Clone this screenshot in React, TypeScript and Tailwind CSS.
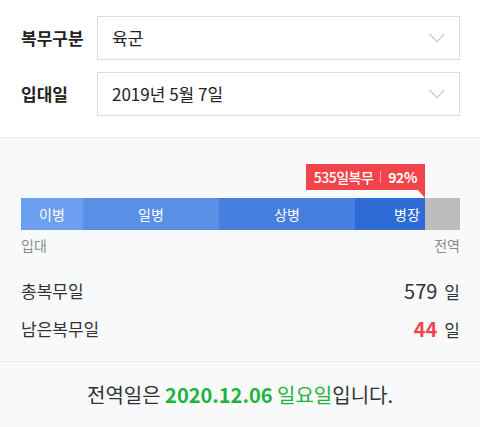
import { ChevronDown } from 'lucide-react'

const ranks = [
  { name: '이병', width: 14.1, color: 'bg-[#6c9ff0]', align: 'justify-center' },
  { name: '일병', width: 31, color: 'bg-[#5a8fe6]', align: 'justify-center' },
  { name: '상병', width: 31, color: 'bg-[#467fdd]', align: 'justify-center' },
  { name: '병장', width: 15.9, color: 'bg-[#2d6ad3]', align: 'justify-end pr-[5px]' },
]

function Field({ label, value }: { label: string; value: string }) {
  return (
    <div className="flex items-center">
      <div className="w-[76px] shrink-0 text-[17px] font-bold text-[#222]">{label}</div>
      <div className="flex-1 h-[44px] border border-[#dcdcdc] bg-white flex items-center justify-between pl-[14px] pr-[8px]">
        <span className="text-[17px] text-[#222]">{value}</span>
        <ChevronDown className="w-[28px] h-[28px] text-[#d0d0d0]" strokeWidth={1.2} />
      </div>
    </div>
  )
}

export default function App() {
  const served = 92

  return (
    <div className="w-[480px] h-[427px] bg-[#f8f9fb] font-['Noto_Sans_CJK_KR',sans-serif] overflow-hidden">
      <div className="bg-white pt-[16px] pb-[21px] pl-[21px] pr-[20px] flex flex-col gap-[12px] border-b border-[#eceef2]">
        <Field label="복무구분" value="육군" />
        <Field label="입대일" value="2019년 5월 7일" />
      </div>

      <div className="pt-[26px] pl-[21px] pr-[20px]">
        <div className="flex" style={{ width: `${served}%` }}>
          <div className="ml-auto flex flex-col items-end">
            <div className="h-[26px] bg-[#f2444b] text-white text-[14px] font-medium tracking-[-0.5px] flex items-center px-[8px] leading-none">
              <span>535일복무</span>
              <span className="mx-[7px] w-px h-[12px] bg-[#ff9ea2]" />
              <span className="font-bold">{served}%</span>
            </div>
            <div className="w-0 h-0 border-l-[7px] border-l-transparent border-t-[8px] border-t-[#f2444b]" />
          </div>
        </div>

        <div className="flex h-[32px] bg-[#bdbdbd]">
          {ranks.map((r) => (
            <div
              key={r.name}
              className={`${r.color} ${r.align} flex items-center text-white text-[14px]`}
              style={{ width: `${r.width}%` }}
            >
              {r.name}
            </div>
          ))}
        </div>

        <div className="flex justify-between text-[14px] text-[#8a8a8a] mt-[5px] leading-[20px]">
          <span>입대</span>
          <span>전역</span>
        </div>

        <div className="mt-[22px] flex items-center justify-between h-[28px] text-[#333]">
          <span className="text-[17px]">총복무일</span>
          <span className="flex items-baseline gap-[7px]">
            <span className="text-[20px]">579</span>
            <span className="text-[17px]">일</span>
          </span>
        </div>
        <div className="mt-[10px] flex items-center justify-between h-[28px] text-[#333]">
          <span className="text-[17px]">남은복무일</span>
          <span className="flex items-baseline gap-[7px]">
            <span className="text-[20px] font-bold text-[#f2444b]">44</span>
            <span className="text-[17px]">일</span>
          </span>
        </div>
      </div>

      <div className="mt-[18px] border-t border-[#ebedf0] h-[66px] flex items-center justify-center text-[20px] text-[#333]">
        <span>전역일은&nbsp;</span>
        <span className="font-bold text-[#1fb33b]">2020.12.06&nbsp;</span>
        <span className="text-[#1fb33b]">일요일</span>
        <span>입니다.</span>
      </div>
    </div>
  )
}
